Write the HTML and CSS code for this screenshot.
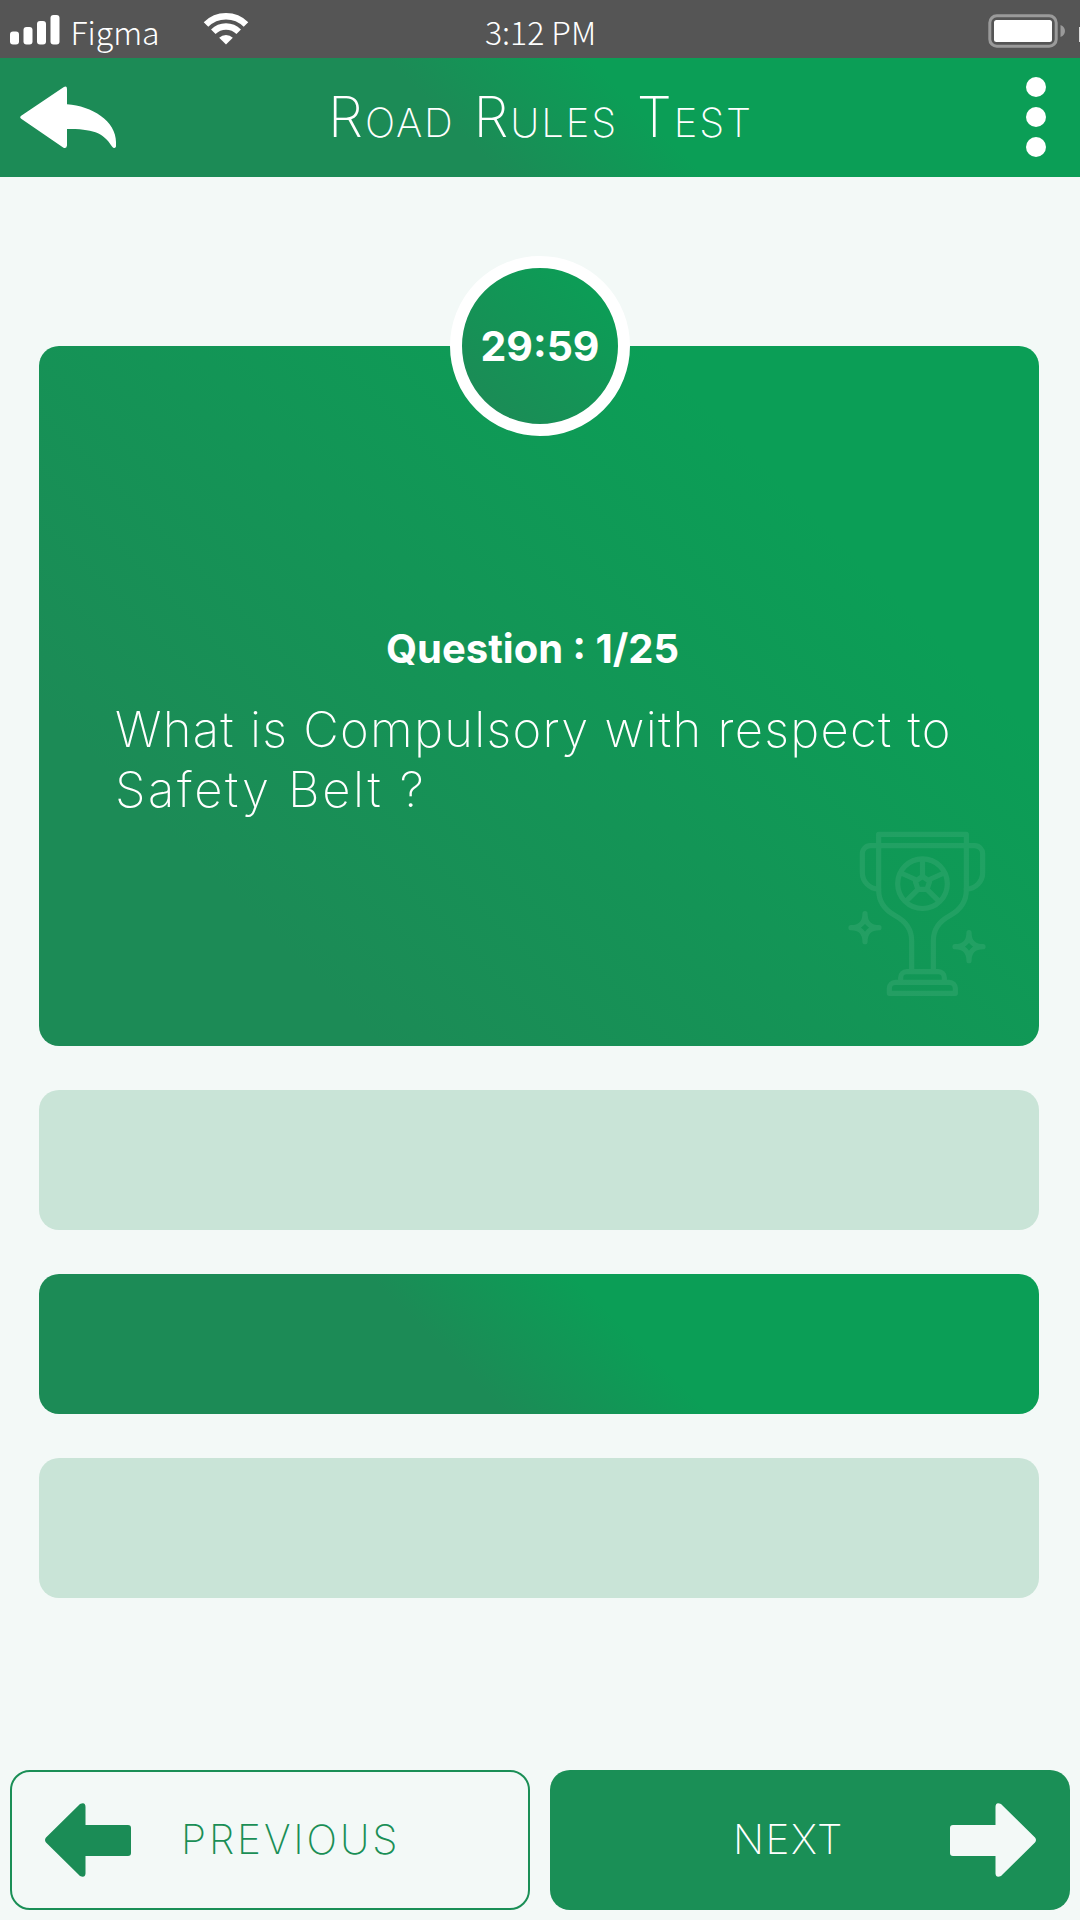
FILE: index.html
```html
<!DOCTYPE html>
<html lang="en">
<head>
<meta charset="utf-8">
<title>Road Rules Test</title>
<link rel="stylesheet" href="styles.css">
</head>
<body>
<div class="screen">
  <div class="status">
    <div class="status-left">
      <svg class="signal" width="50" height="30" viewBox="0 0 50 30" fill="#fff">
        <rect x="0" y="16.5" width="9" height="13" rx="3"/>
        <rect x="13.5" y="12" width="9" height="17.5" rx="3"/>
        <rect x="27" y="6" width="9" height="23.5" rx="3"/>
        <rect x="40.5" y="0" width="9" height="29.5" rx="3"/>
      </svg>
      <span class="carrier">Figma</span>
      <svg class="wifi" width="46" height="33" viewBox="0 0 46 33">
        <g fill="none" stroke="#fff" stroke-width="6.4">
          <path d="M3 12.5A28.3 28.3 0 0 1 43 12.5"/>
          <path d="M10.3 19.8A18 18 0 0 1 35.7 19.8"/>
        </g>
        <path d="M23 32.5L16.2 25.8A9.6 9.6 0 0 1 29.8 25.8Z" fill="#fff"/>
      </svg>
    </div>
    <span class="clock">3:12 PM</span>
    <svg class="battery" width="92" height="34" viewBox="0 0 92 34">
      <rect x="1.8" y="1.8" width="66.4" height="30.4" rx="7" fill="none" stroke="#9a9a9a" stroke-width="3"/>
      <rect x="6" y="6" width="58" height="22" rx="2.5" fill="#fff"/>
      <path d="M72.5 11C78.5 13 78.5 21 72.5 23Z" fill="#9a9a9a"/>
      <rect x="91" y="13" width="1" height="15" fill="#ddd"/>
    </svg>
  </div>

  <header class="appbar">
    <svg class="back" width="98" height="64" viewBox="0 0 98 64" fill="#fff">
      <path d="M1.2 29.8L43.5 1.2Q47-.8 47 3V18.2C72 20 96 35 96 56V60.5Q94.5 63.5 92 60.5C83 46 72 43 47 43V59.5Q46.5 63 43.5 61.8L1.2 32.8Q-.8 31.3 1.2 29.8Z"/>
    </svg>
    <h1 class="title"><span class="word">Road</span> <span class="word">Rules</span> <span class="word">Test</span></h1>
    <svg class="menu" width="20" height="80" viewBox="0 0 20 80" fill="#fff">
      <circle cx="10" cy="10" r="10"/><circle cx="10" cy="40" r="10"/><circle cx="10" cy="70" r="10"/>
    </svg>
  </header>

  <main class="content">
    <section class="card">
      <div class="timer"><span class="time">29:59</span></div>
      <h2 class="count">Question : 1/25</h2>
      <p class="question"><span class="line-1">What is Compulsory with respect to</span><br><span class="line-2">Safety Belt ?</span></p>
      <svg class="trophy" width="142" height="168" viewBox="78 60 426 504">
        <g fill="none" stroke="#fff" stroke-width="15.5" stroke-linejoin="round" stroke-linecap="round" opacity=".075">
          <path d="M176 107V73H439V107"/>
          <path d="M176 237A49 49 0 0 1 127 188V131A24 24 0 0 1 151 107H464A24 24 0 0 1 488 131V188A49 49 0 0 1 439 237"/>
          <path d="M176 107V240C176 278 198 302 226 317S275 355 275 392V484"/>
          <path d="M439 107V240C439 278 417 302 389 317S340 355 340 392V484"/>
          <circle cx="307.5" cy="221" r="74.5"/>
          <path d="M307.5 199L329 214L321 238H294L286 214Z"/>
          <path d="M307.5 150V195M243 189L283 207M372 189L332 207M260 272L294 238M355 272L321 238"/>
          <path d="M242 517V503A18 18 0 0 1 260 485H355A18 18 0 0 1 373 503V517"/>
          <path d="M208 550V535A18 18 0 0 1 226 517H388A18 18 0 0 1 406 535V550Z"/>
          <path d="M135 311C135 338 120 353 93 353C120 353 135 368 135 395C135 368 150 353 177 353C150 353 135 338 135 311Z"/>
          <path d="M447 368C447 395 432 410 405 410C432 410 447 425 447 452C447 425 462 410 489 410C462 410 447 395 447 368Z"/>
        </g>
      </svg>
    </section>
    <div class="option"></div>
    <div class="option selected"></div>
    <div class="option"></div>
  </main>

  <nav class="nav">
    <div class="btn prev">
      <svg class="arrow" width="86" height="74" viewBox="0 0 86 74" fill="#1b8c56">
        <path d="M1 34.5L35 1Q40.5-1.5 40.5 4V22H83Q86 22 86 25V50Q86 53 83 53H40.5V70.5Q40 75.5 35 73L1 39.5Q-1 37 1 34.5Z"/>
      </svg>
      <span class="label label-prev">PREVIOUS</span>
    </div>
    <div class="btn next">
      <span class="label label-next">NEXT</span>
      <svg class="arrow" width="86" height="74" viewBox="0 0 86 74" fill="#f3f9f7">
        <path d="M85 34.5L51 1Q45.5-1.5 45.5 4V22H3Q0 22 0 25V50Q0 53 3 53H45.5V70.5Q46 75.5 51 73L85 39.5Q87 37 85 34.5Z"/>
      </svg>
    </div>
  </nav>
</div>
</body>
</html>
```
FILE: styles.css
```css
* { box-sizing: border-box; }

body {
  margin: 0;
  font-family: Inter, Lato, sans-serif;
  color: #fff;
}

svg { display: block; flex: none; }

.screen {
  width: 1080px;
  height: 1920px;
  display: flex;
  flex-direction: column;
  background: #f3f9f7;
  overflow: hidden;
}

.status {
  height: 58px;
  flex: none;
  display: grid;
  grid-template-columns: 1fr auto 1fr;
  background: #555;
  font: 300 32px/58px "Noto Sans CJK SC", "Open Sans", sans-serif;
}
.status-left { display: flex; padding-left: 9.5px; }
.signal { margin-top: 15px; }
.carrier { margin-left: 11px; width: 133px; padding-top: 2px; }
.wifi { margin-top: 12px; margin-left: -1px; }
.clock { padding: 2px 0 0 1px; }
.battery { margin-top: 14px; justify-self: end; }

.appbar {
  height: 119px;
  flex: none;
  display: flex;
  align-items: center;
  padding: 0 34px 2px 20px;
  background: linear-gradient(45deg, #1c8b56 42%, #0b9e56 59%);
}
.back { margin-top: 2px; }
.title {
  margin: 6px auto 0 210px;
  font-size: 56px;
  line-height: 70px;
  font-weight: 250;
  word-spacing: 3px;
  white-space: nowrap;
}
/* Small capitals: the first letter of each word keeps the full size */
.word {
  display: inline-block;
  font-size: 40px;
  text-transform: uppercase;
  letter-spacing: 1.9px;
}
.word::first-letter { font-size: 56px; }

.content {
  display: flex;
  flex-direction: column;
  gap: 44px;
  padding: 169px 41px 0 39px;
}
.card {
  position: relative;
  height: 700px;
  display: flex;
  flex-direction: column;
  border-radius: 20px;
  padding: 275px 51px 48px 76px;
  background: linear-gradient(45deg, #1c8b56 20%, #0b9e56 77%);
}
.timer {
  position: absolute;
  left: 411px;
  top: -90px;
  width: 180px;
  height: 180px;
  display: flex;
  align-items: center;
  justify-content: center;
  border: 12px solid #fff;
  border-radius: 50%;
  background: linear-gradient(45deg, #1c8b56 15%, #0b9e56 85%) border-box;
}
.time { font: 700 41px/50px Inter, sans-serif; }
.count {
  margin: 0 0 0 271px;
  font-size: 40px;
  line-height: 56px;
  font-weight: 700;
  white-space: nowrap;
}
.question {
  margin: 23px 0 0;
  font-size: 49px;
  line-height: 60px;
  font-weight: 250;
  white-space: nowrap;
}
.line-1 { letter-spacing: 1.28px; }
.line-2 { letter-spacing: 2.6px; }
.trophy { margin-top: auto; align-self: flex-end; }

.option { height: 140px; border-radius: 20px; background: #c9e4d7; }
.selected { background: linear-gradient(45deg, #1c8b56 41%, #0b9e56 59%); }

.nav {
  display: grid;
  grid-template-columns: 1fr 1fr;
  gap: 20px;
  margin-top: auto;
  padding: 0 10px 10px;
}
.btn {
  height: 140px;
  display: flex;
  align-items: center;
  border-radius: 20px;
  font-size: 40.5px;
  font-weight: 200;
}
.label { margin-bottom: 2px; }
.label-prev { letter-spacing: 2.9px; }
.label-next { letter-spacing: 1.6px; }
.prev { padding-left: 33px; gap: 50px; border: 2px solid #1a8f56; color: #1a8f56; }
.next { padding: 0 34px 0 183px; justify-content: space-between; background: #1a8f56; }
```
